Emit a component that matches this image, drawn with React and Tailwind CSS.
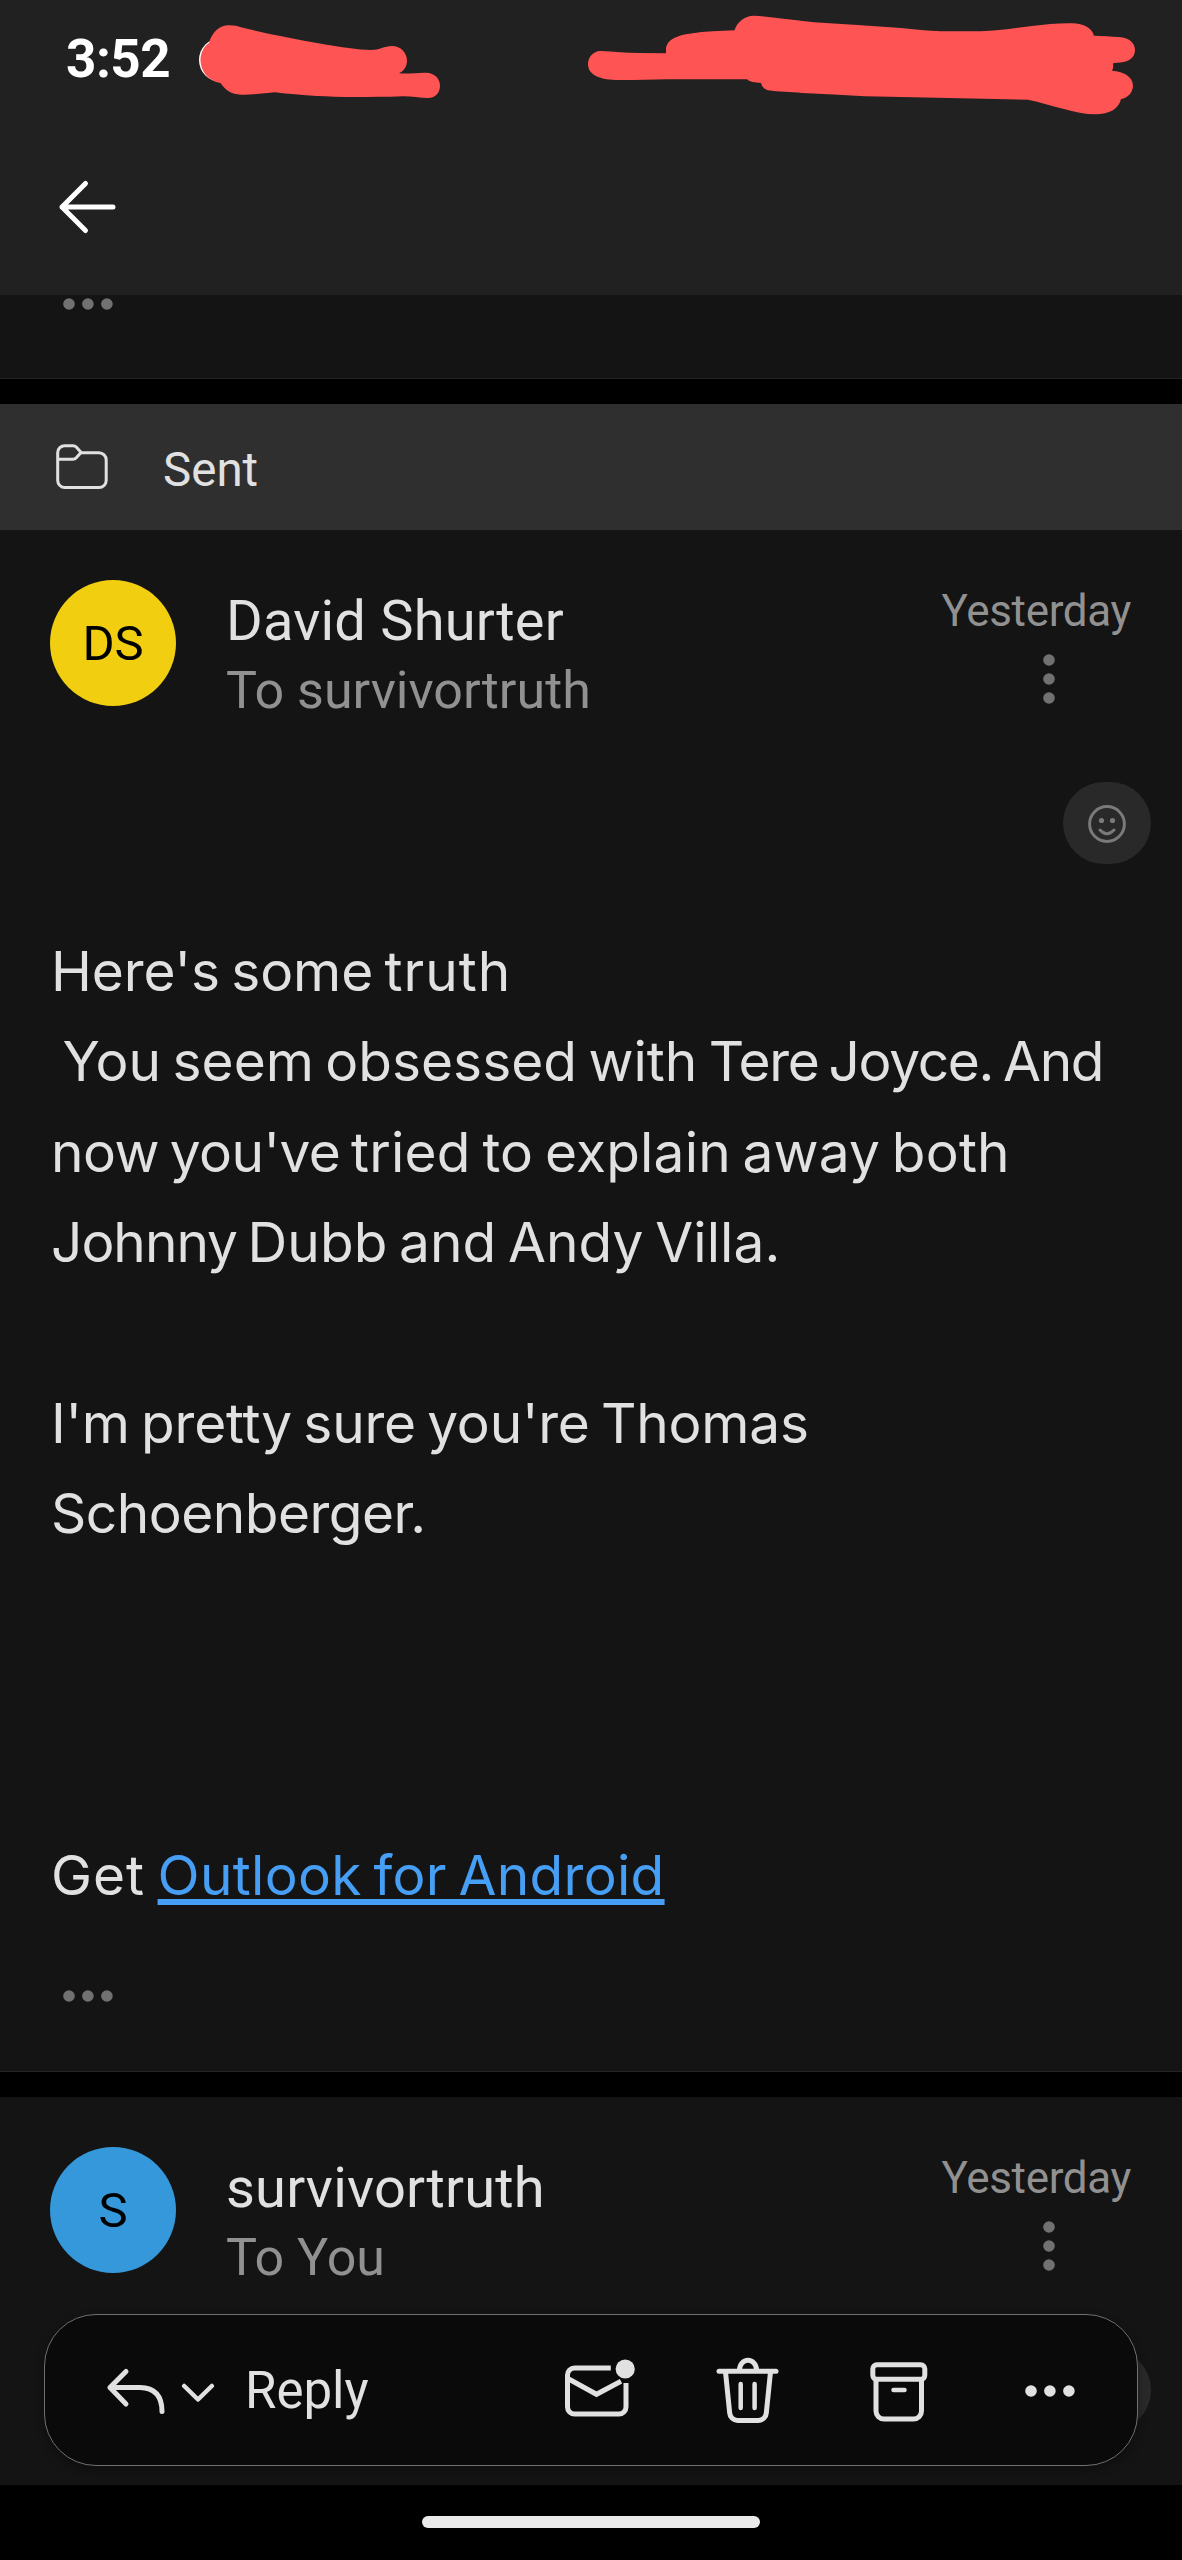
import React from "react";

// each line is a list of runs, with its own letter spacing
const BODY_LINES = [
    [
        { text: "Here's some ", tracking: "tracking-[-0.1px]" },
        { text: "truth", tracking: "tracking-[1px]" }
    ],
    [
        { text: "\u00a0You seem obsessed with ", tracking: "tracking-[0px]" },
        { text: "Tere Joyce. And", tracking: "tracking-[-1.35px]" }
    ],
    [
        { text: "now you've ", tracking: "tracking-[-0.55px]" },
        { text: "tried to explain away both", tracking: "tracking-[0.2px]" }
    ],
    [
        { text: "Johnny ", tracking: "tracking-[-1px]" },
        { text: "Dubb and Andy Villa.", tracking: "tracking-[0.1px]" }
    ],
    [],
    [{ text: "I'm pretty sure you're Thomas", tracking: "tracking-[-0.2px]" }],
    [{ text: "Schoenberger.", tracking: "tracking-[-0.5px]" }],
    [],
    [],
    []
];

function StatusBar() {
    return (
        <div className="relative h-[126px]">
            <div className="pl-[66px] pt-[27px] text-[53px] leading-[64px] font-bold tracking-[-0.5px] text-white">
                3:52
            </div>
            {/* marker strokes over the status icons */}
            <svg className="absolute left-0 top-0" width="1182" height="126" viewBox="0 0 1182 126">
                <circle cx="221" cy="60" r="22" fill="#fff" />
                <path
                    fill="#ff5454"
                    d="M209 43 C212 32 220 25 229 25.3 C234 25.4 238 26 241 27.3 C252 30 265 33 279 35.7 C294 39 309 41.500 324 44.3 C340 47 358 50 371 50 C380 50 384 46 392 46 C401 46 407 53 407 60.7 C407 66 404 71 399 73.3 C408 74 418 72.500 426 72.7 C435 73 440 79 440 85.7 C440 92 436 98 428 98 C420 98 411 96.200 403 96.3 C386 97 370 97 354 97 C340 97 328 96.500 317 96 C302 95 288 94 275 92.3 C264 93 252 95 241 94.7 C231 94 226 91 220.5 83 C208 81 200.500 71 200.5 60 C200.500 53 204 46 209 43 Z"
                />
                <path
                    fill="#ff5454"
                    d="M588 64 C588 57 594 50 601.6 51 C614 51.500 626 53 639 53 L666 53.3 L666 48 C667 40 677 35 691 33.5 C705 31 720 31 734.500 30.3 C737 22 745 15.500 754 15.7 C774 17 794 20.500 814 22.3 C843 24 872 26 901 28 C914 29 928 31 941 31.3 L980.500 31.3 C998 30.500 1015 28 1032 26 C1045 24.500 1059 23 1072 23.3 C1084 23.500 1092 28 1094 35.7 C1102 36 1111 36.500 1119 37 C1129 37.500 1135 43 1135 50 C1135 55 1132 59 1127 61 C1123 62.500 1118 62.500 1113 63.3 C1113.500 67 1113 69 1112 70.7 C1124 71.500 1133 77 1133 85.7 C1133 92 1128 98 1121 99 C1119 109 1109 114.300 1095.5 114.3 C1085 114.300 1074 112 1064 109 C1052 106 1040 102 1028 99.7 L949 98 L865 96.3 C844 95 823 94 802 93 C791 92 778 92 768 90.3 C764 89 761.500 86 761 83 C755 82.500 750 82 747 79.3 L667 79.3 C650 79.500 632 80.200 615.5 80 C598 79.500 588 74 588 64 Z"
                />
            </svg>
        </div>
    );
}

function BackArrow() {
    return (
        <svg width="64" height="56" viewBox="0 0 64 56" fill="none" stroke="#fff" strokeWidth="5" strokeLinecap="round" strokeLinejoin="round">
            <path d="M30.500 4.500 L7 28 L30.500 51.500 M7 28 H58" />
        </svg>
    );
}

function FolderIcon() {
    return (
        <svg width="52" height="46" viewBox="0 0 52 46" fill="none" stroke="#e1e1e1" strokeWidth="3" strokeLinejoin="round">
            <path d="M1.700 8.500 A7 7 0 0 1 8.700 1.700 H17 Q19 1.700 20.500 3.300 L25.300 8.800 H43 A7.200 7.200 0 0 1 50.200 16 V36.500 A7.200 7.200 0 0 1 43 43.600 H8.900 A7.200 7.200 0 0 1 1.700 36.500 Z" />
            <path d="M1.700 15.300 H17 Q19 15.300 20.300 13.800 L24.800 8.800" />
        </svg>
    );
}

function MoreDots({ color = "#717171" }) {
    return (
        <svg width="50" height="12" viewBox="0 0 50 12" fill={color}>
            <circle cx="6" cy="6" r="5.800" />
            <circle cx="24.900" cy="6" r="5.800" />
            <circle cx="43.900" cy="6" r="5.800" />
        </svg>
    );
}

function KebabDots() {
    return (
        <svg width="12" height="50" viewBox="0 0 12 50" fill="#717171">
            <circle cx="6" cy="6" r="5.800" />
            <circle cx="6" cy="25" r="5.800" />
            <circle cx="6" cy="44" r="5.800" />
        </svg>
    );
}

function ReactionButton() {
    return (
        <button className="ml-auto mr-[31px] flex h-[82px] w-[88px] items-center justify-center rounded-[41px] bg-[#292929]">
            <svg width="38" height="38" viewBox="0 0 38 38" className="mt-[1px]" fill="none" stroke="#7a7a7a" strokeWidth="3" strokeLinecap="round">
                <circle cx="19" cy="19" r="17.400" />
                <path d="M12 25 Q19 32.500 26 25" />
                <circle cx="13.500" cy="15.500" r="2.600" fill="#7a7a7a" stroke="none" />
                <circle cx="24.500" cy="15.500" r="2.600" fill="#7a7a7a" stroke="none" />
            </svg>
        </button>
    );
}

function MessageHeader({ initials, avatarClass, name, to }) {
    return (
        <>
            <div className="flex h-[252px] items-start pl-[50px] pr-[51px]">
                <div className={`mt-[50px] flex size-[126px] items-center justify-center rounded-full pt-[2px] text-[49px] text-black ${avatarClass}`}>
                    {initials}
                </div>
                <div className="ml-[50px] mt-[58px] flex-1">
                    <div className="text-[56px] leading-[66px] tracking-[0.2px] text-[#e1e1e1]">{name}</div>
                    <div className="mt-[1px] text-[52px] leading-[72px] text-[#919191]">{to}</div>
                </div>
                <div className="mt-[55px]">
                    <div className="text-[44px] leading-[52px] tracking-[-0.35px] text-[#919191]">Yesterday</div>
                    <div className="mt-[17px] flex justify-end pr-[76px]">
                        <KebabDots />
                    </div>
                </div>
            </div>
            <ReactionButton />
        </>
    );
}

function ReplyBar() {
    return (
        <div className="absolute left-[44px] top-[2314px] flex h-[152px] w-[1094px] items-center rounded-[52px] border-[1.5px] border-[#707070] bg-[#0a0a0a] pl-[61px] pt-[2px] shadow-[0_4px_10px_rgba(0,0,0,0.35)]">
            <svg width="60" height="48" viewBox="0 0 60 48" className="mt-[-1px]" fill="none" stroke="#e1e1e1" strokeWidth="5" strokeLinecap="round" strokeLinejoin="round">
                <path d="M20 4.500 L4 20.500 L20 37 M4 20.500 H34 Q56 21 56 44.500" />
            </svg>
            <svg width="34" height="20" viewBox="0 0 34 20" className="ml-[15px] mt-[4px]" fill="none" stroke="#e1e1e1" strokeWidth="4.500" strokeLinecap="round" strokeLinejoin="round">
                <path d="M3.200 3 L17 16.500 L30.800 3" />
            </svg>
            <span className="ml-[30px] w-[310px] text-[51px] leading-[60px] text-[#e1e1e1]">Reply</span>

            {/* mark unread */}
            <svg width="76" height="68" viewBox="0 0 76 68" className="ml-[5px]" fill="none" stroke="#e1e1e1" strokeWidth="5" strokeLinejoin="round">
                <path d="M50.800 11 H14.500 A7 7 0 0 0 7.500 18 V50 A7 7 0 0 0 14.500 57 H59 A7 7 0 0 0 66 50 V26" />
                <path d="M8.700 22 L36.500 37.300 L61 24.300" strokeLinejoin="miter" />
                <circle cx="65.200" cy="12" r="9.600" fill="#e1e1e1" stroke="none" />
            </svg>
            <svg width="68" height="68" viewBox="0 0 68 68" className="ml-[78px]" fill="none" stroke="#e1e1e1" strokeWidth="5" strokeLinecap="round" strokeLinejoin="round">
                <path d="M5 14.300 H62" />
                <path d="M25.500 13 A8.500 9.700 0 0 1 42.500 13" />
                <path d="M11.500 15 L15.700 56 A8 8 0 0 0 23.600 63.500 H44.400 A8 8 0 0 0 52.300 56 L56.500 15" />
                <path d="M26.700 27 V51 M40.600 27 V51" strokeWidth="4.500" />
            </svg>
            <svg width="60" height="62" viewBox="0 0 60 62" className="ml-[87px] mt-[2px]" fill="none" stroke="#e1e1e1" strokeWidth="5" strokeLinejoin="round">
                <rect x="3.800" y="3.800" width="52" height="14.500" rx="4" />
                <path d="M7 18.500 V50 A8 8 0 0 0 15 58 H44.500 A8 8 0 0 0 52.500 50 V18.500" />
                <path d="M24.500 29 H35.500" strokeWidth="4.500" strokeLinecap="round" />
            </svg>
            <div className="ml-[96px]">
                <MoreDots color="#e1e1e1" />
            </div>
        </div>
    );
}

export default function App() {
    return (
        <div className="relative h-[2560px] w-[1182px] overflow-hidden bg-[#141414] font-[Roboto,sans-serif]">
            <header className="h-[295px] bg-[#212121]">
                <StatusBar />
                <div className="pl-[55px] pt-[53px]">
                    <BackArrow />
                </div>
            </header>

            {/* tail of the previous message */}
            <div className="h-[84px] border-b border-[#242424] pl-[63px] pt-[3px]">
                <MoreDots />
            </div>
            <div className="h-[25px] bg-black" />

            <div className="flex h-[126px] items-center bg-[#2f2f2f] pl-[56px]">
                <FolderIcon />
                <span className="ml-[55px] mt-[6px] text-[47.5px] leading-[56px] text-[#e1e1e1]">Sent</span>
            </div>

            <section className="h-[1542px] border-b border-[#242424]">
                <MessageHeader initials="DS" avatarClass="bg-[#f1ce0f]" name="David Shurter" to="To survivortruth" />
                <div className="mt-[62px] pl-[51px] font-[Inter,sans-serif] text-[55px] leading-[90.4px] whitespace-pre text-[#e1e1e1] [word-spacing:-4px]">
                    {BODY_LINES.map((runs, i) => (
                        <p key={i} className="h-[90.4px]">
                            {runs.map((run, j) => (
                                <span key={j} className={run.tracking}>{run.text}</span>
                            ))}
                        </p>
                    ))}
                    <p>
                        <span className="tracking-[1px]">Get </span>
                        <a className="tracking-[0.3px] text-[#479ef5] underline decoration-[5.5px] underline-offset-[4px] [text-decoration-skip-ink:none]">
                            Outlook for Android
                        </a>
                    </p>
                </div>
                <div className="mt-[70px] pl-[63px]">
                    <MoreDots />
                </div>
            </section>
            <div className="h-[25px] bg-black" />

            <section className="h-[388px]">
                <MessageHeader initials="S" avatarClass="bg-[#3498db]" name="survivortruth" to="To You" />
            </section>

            <footer className="flex h-[75px] justify-center bg-black pt-[31px]">
                <div className="h-[12px] w-[338px] rounded-full bg-[#ebebeb]" />
            </footer>

            <ReplyBar />
        </div>
    );
}
